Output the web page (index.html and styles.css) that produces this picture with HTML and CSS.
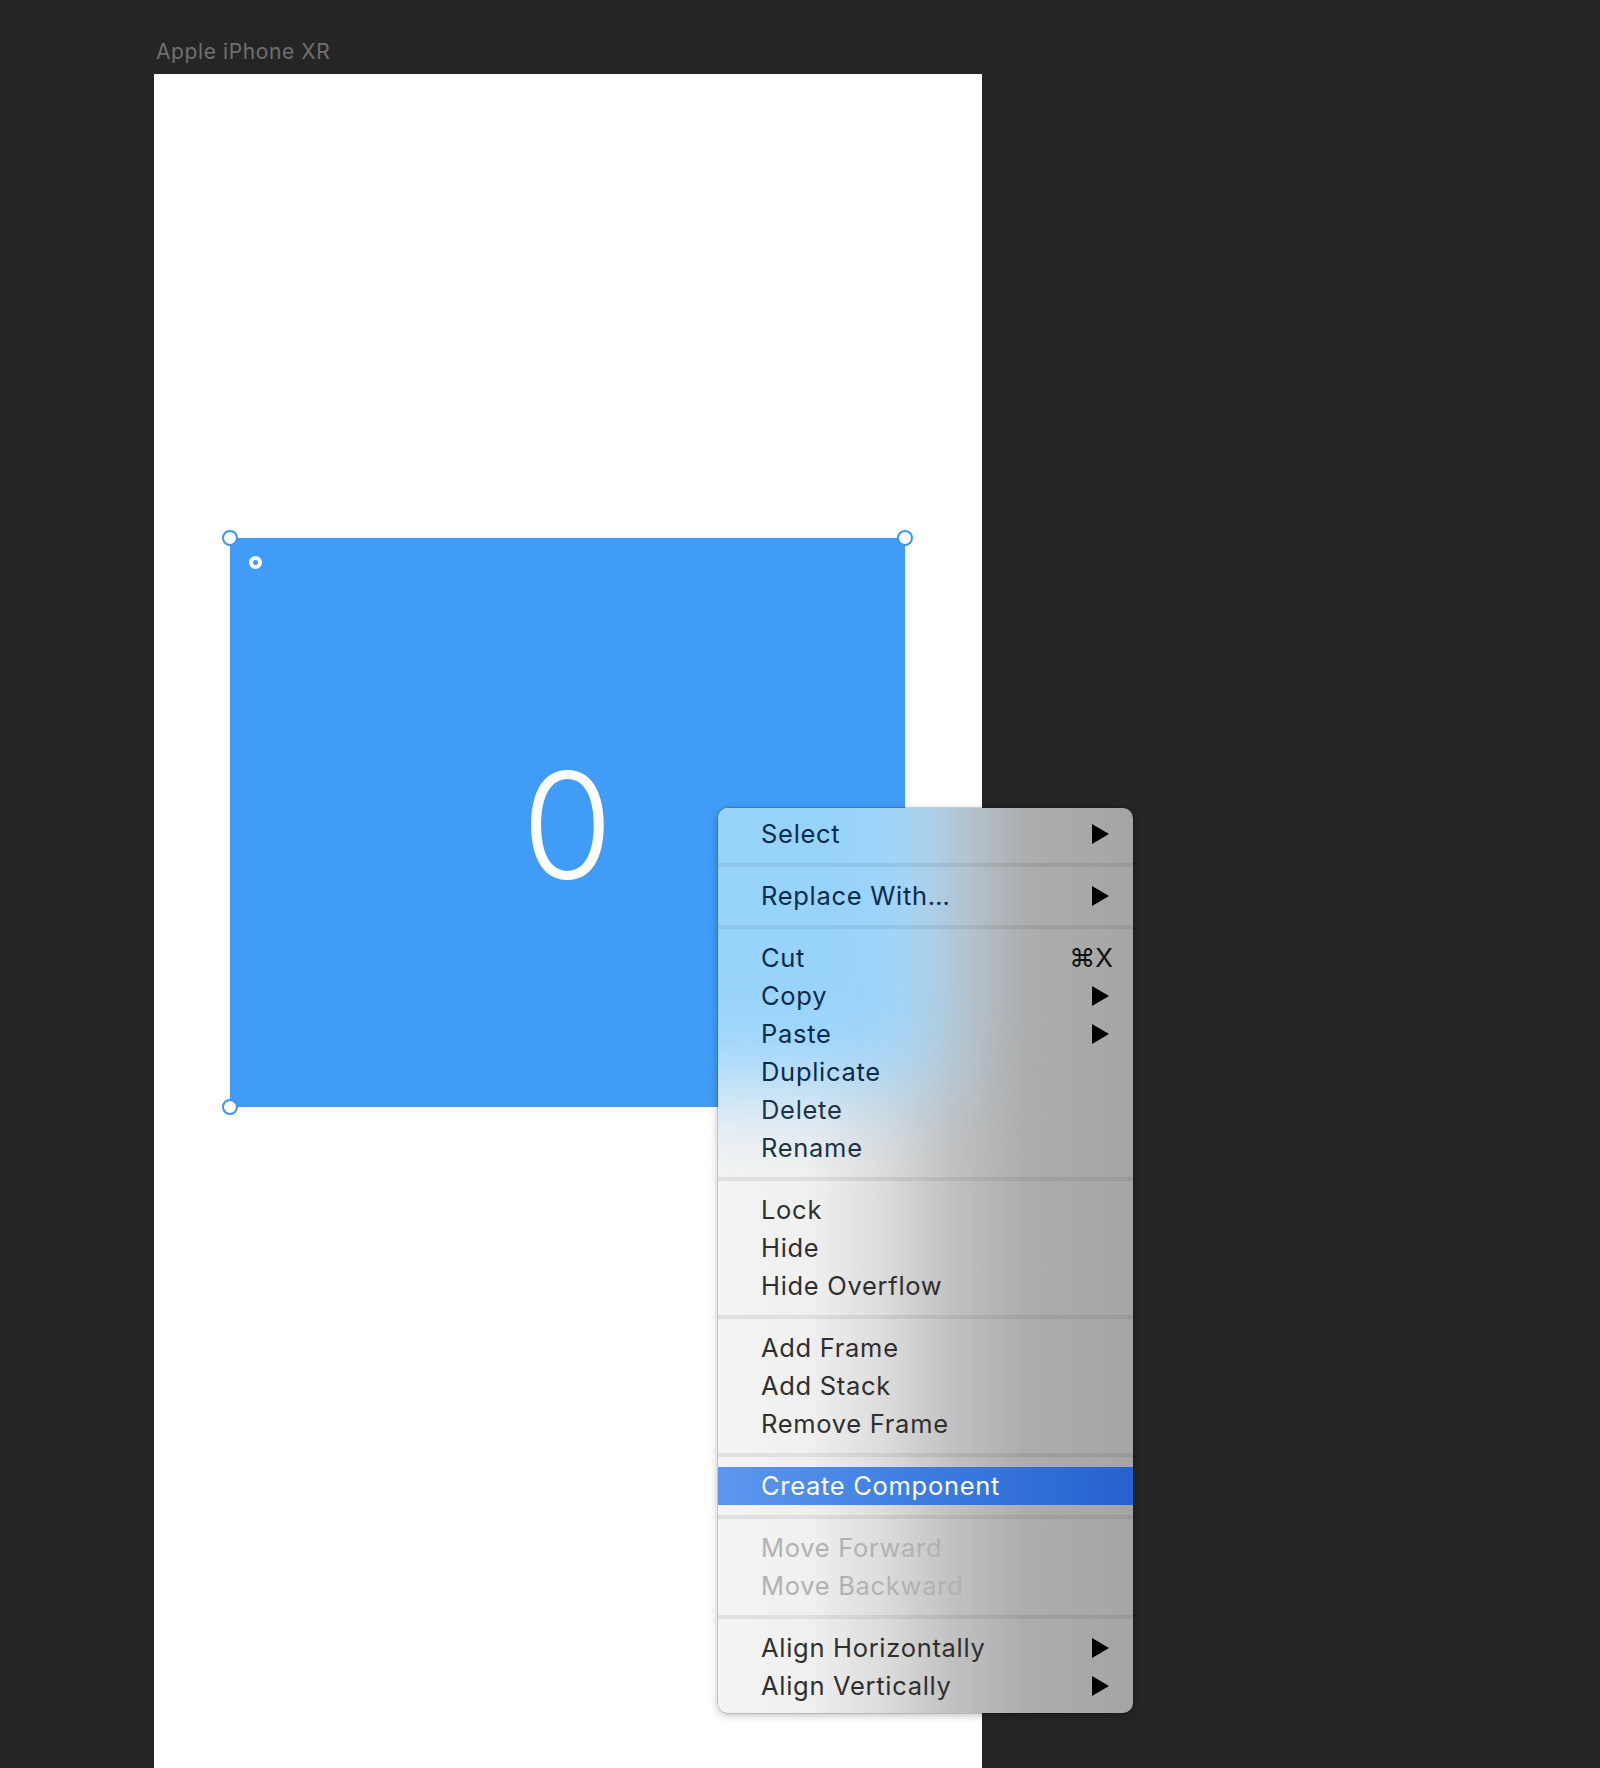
FILE: index.html
```html
<!DOCTYPE html>
<html>
<head>
<meta charset="utf-8">
<link rel="stylesheet" href="styles.css">
</head>
<body>
<div class="canvas">
  <div class="frame-label">Apple iPhone XR</div>
  <div class="frame">
    <div class="box">
      <span class="handle h-tl"></span>
      <span class="handle h-tr"></span>
      <span class="handle h-bl"></span>
      <span class="origin"></span>
      <span class="count">0</span>
    </div>
  </div>

  <div class="menu">
    <div class="item nav"><span>Select</span><svg class="arrow" viewBox="0 0 17 20"><polygon points="0,0 17,10 0,20"/></svg></div>
    <div class="sep"></div>
    <div class="item nav"><span>Replace With…</span><svg class="arrow" viewBox="0 0 17 20"><polygon points="0,0 17,10 0,20"/></svg></div>
    <div class="sep"></div>
    <div class="item nav"><span>Cut</span><span class="key">⌘X</span></div>
    <div class="item nav"><span>Copy</span><svg class="arrow" viewBox="0 0 17 20"><polygon points="0,0 17,10 0,20"/></svg></div>
    <div class="item nav"><span>Paste</span><svg class="arrow" viewBox="0 0 17 20"><polygon points="0,0 17,10 0,20"/></svg></div>
    <div class="item nav"><span>Duplicate</span></div>
    <div class="item nav2"><span>Delete</span></div>
    <div class="item nav2"><span>Rename</span></div>
    <div class="sep"></div>
    <div class="item"><span>Lock</span></div>
    <div class="item"><span>Hide</span></div>
    <div class="item"><span>Hide Overflow</span></div>
    <div class="sep"></div>
    <div class="item"><span>Add Frame</span></div>
    <div class="item"><span>Add Stack</span></div>
    <div class="item"><span>Remove Frame</span></div>
    <div class="sep"></div>
    <div class="item active"><span>Create Component</span></div>
    <div class="sep"></div>
    <div class="item disabled"><span>Move Forward</span></div>
    <div class="item disabled"><span>Move Backward</span></div>
    <div class="sep"></div>
    <div class="item"><span>Align Horizontally</span><svg class="arrow" viewBox="0 0 17 20"><polygon points="0,0 17,10 0,20"/></svg></div>
    <div class="item"><span>Align Vertically</span><svg class="arrow" viewBox="0 0 17 20"><polygon points="0,0 17,10 0,20"/></svg></div>
  </div>
</div>
</body>
</html>
```

FILE: styles.css
```css
html, body {
  margin: 0;
  padding: 0;
  background: #252525;
}

body {
  font-family: "Inter", "Liberation Sans", sans-serif;
}

.canvas {
  position: relative;
  height: 1768px;
  overflow: hidden;
  padding-left: 154px;
  box-sizing: border-box;
  display: flex;
  flex-direction: column;
}

.frame-label {
  padding-top: 40px;
  padding-left: 2px;
  height: 24px;
  line-height: 24px;
  font-size: 21px;
  letter-spacing: 0.6px;
  color: #6f6f6f;
  margin-bottom: 10px;
}

.frame {
  width: 828px;
  flex: 1;
  background: #ffffff;
  padding-top: 464px;
  padding-left: 76px;
  box-sizing: border-box;
}

.box {
  position: relative;
  width: 675px;
  height: 569px;
  background: #409cf6;
  display: flex;
  align-items: center;
  justify-content: center;
}

.count {
  color: #ffffff;
  font-size: 148px;
  font-weight: 300;
  line-height: 1;
  margin-top: 6px;
}

.handle {
  position: absolute;
  width: 12px;
  height: 12px;
  border: 2px solid #3d95f0;
  border-radius: 50%;
  background: #ffffff;
}

.h-tl { left: -8px; top: -8px; }
.h-tr { right: -8px; top: -8px; }
.h-bl { left: -8px; bottom: -8px; }

.origin {
  position: absolute;
  left: 19px;
  top: 18px;
  width: 5px;
  height: 5px;
  border: 4px solid #ffffff;
  border-radius: 50%;
}

.menu {
  position: absolute;
  left: 718px;
  top: 808px;
  width: 415px;
  box-sizing: border-box;
  padding: 7px 0 8px;
  border-radius: 10px;
  overflow: hidden;
  background: linear-gradient(to right, #f3f3f3 0%, #f0f0f0 22%, #dcdcdc 40%, #c2c2c2 56%, #adadad 74%, #a5a5a5 100%);
  box-shadow: 0 2px 8px rgba(0, 0, 0, 0.28), 0 0 0 0.5px rgba(0, 0, 0, 0.25);
}

.menu::before {
  content: "";
  position: absolute;
  left: -120px;
  top: -120px;
  width: 345px;
  height: 400px;
  background: #98d3fc;
  filter: blur(45px);
  z-index: 0;
}

.item {
  position: relative;
  z-index: 1;
  height: 38px;
  line-height: 38px;
  font-size: 25.5px;
  letter-spacing: 0.7px;
  color: #2f2f2f;
  padding: 0 24px 0 43px;
  display: flex;
  justify-content: space-between;
  align-items: center;
  white-space: nowrap;
}

.item.nav { color: #0b2b4b; }
.item.nav2 { color: #1d3346; }

.item.active {
  color: #ffffff;
  background: linear-gradient(to right, #5d98f0 0%, #3f7fe2 45%, #2562cf 100%);
}

.item.disabled { color: #b2b2b2; }

.key {
  margin-right: -4px;
  font-size: 26px;
  letter-spacing: 0;
  color: #111;
}

.arrow {
  width: 17px;
  height: 20px;
  fill: #000000;
}

.sep {
  position: relative;
  z-index: 1;
  height: 4px;
  margin: 10px 0;
  background: rgba(0, 0, 0, 0.07);
}
```
